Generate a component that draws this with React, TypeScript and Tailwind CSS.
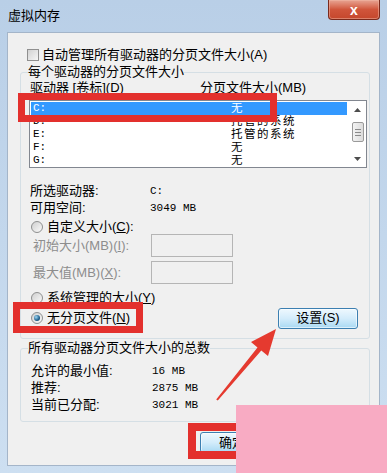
import React from 'react';

const drives = [
  { d: 'C:', s: '无', sel: true },
  { d: 'D:', s: '托管的系统' },
  { d: 'E:', s: '托管的系统' },
  { d: 'F:', s: '无' },
  { d: 'G:', s: '无' },
];

function Radio({ checked = false }: { checked?: boolean }) {
  return (
    <span className="w-[12px] h-[12px] shrink-0 rounded-full border border-[#8e8f8f] bg-linear-to-br from-[#cfcfcf] to-[#fbfbfb] flex items-center justify-center">
      {checked && (
        <span className="w-[6px] h-[6px] rounded-full bg-[radial-gradient(circle_at_35%_35%,#9fd8f4,#1f5f8c_60%,#133f60)]" />
      )}
    </span>
  );
}

function WinButton({ children, className = '' }: { children: React.ReactNode; className?: string }) {
  return (
    <div className={`h-[21px] rounded-[3px] border border-[#3c7fb1] bg-linear-to-b from-[#eef8fe] via-[#d3ecfb] to-[#a9d9f3] flex items-center text-[13px] leading-[14px] shadow-[inset_0_0_0_1px_#ffffff99] ${className}`}>
      {children}
    </div>
  );
}

export default function App() {
  return (
    <div className="w-[387px] h-[473px] relative overflow-hidden bg-linear-to-b from-[#b9cfe7] to-[#cddff1] font-['Liberation_Sans','Noto_Sans_CJK_SC',sans-serif] text-black">
      {/* title bar */}
      <div className="h-[32px] flex items-start justify-between">
        <div className="pl-[8px] mt-[9px] text-[13px] leading-[14px]">虚拟内存</div>
        <div className="mr-[7px] w-[52px] h-[20px] rounded-b-[4px] border border-t-0 border-[#7a2a1c] bg-linear-to-b from-[#e7a493] via-[#d0553b] to-[#c5472c] flex items-center justify-center shadow-[inset_0_0_0_1px_#f2b9a880]">
          <span className="text-white font-bold text-[14px] leading-[14px]">x</span>
        </div>
      </div>

      {/* dialog body */}
      <div className="mx-[7px] h-[434px] bg-[#f0f0f0] border border-[#a4b5c9] pl-[12px] flex flex-col text-[13px] leading-[14px]">
        <div className="mt-[15px] h-[14px] flex items-center pl-[7px] gap-[3px]">
          <span className="w-[12px] h-[12px] border border-[#8f8f8f] bg-linear-to-br from-[#d2d2d2] to-[#f6f6f6]" />
          <span>自动管理所有驱动器的分页文件大小(A)</span>
        </div>

        <fieldset className="mt-[3px] w-[350px] border border-[#d5dfe5] rounded-[3px] pb-[10px]">
          <legend className="ml-[7px] leading-[14px]">每个驱动器的分页文件大小</legend>
          <div className="mt-[2px] h-[14px] flex pl-[9px]">
            <span className="w-[170px]">驱动器 [卷标](D)</span>
            <span>分页文件大小(MB)</span>
          </div>

          <div className="mt-[5px] ml-[8px] w-[338px] h-[68px] border border-[#828790] bg-white flex">
            <div className="flex-1 pt-[1px] pl-[1px] pr-[2px]">
              {drives.map((r) => (
                <div key={r.d} className={`h-[13px] flex items-center ${r.sel ? 'bg-[#3399ff] text-white' : ''}`}>
                  <span className="w-[200px] pl-[2px] font-['Liberation_Mono',monospace] text-[11px] leading-[13px]">{r.d}</span>
                  <span className="text-[11.5px] leading-[13px] tracking-[1.5px]">{r.s}</span>
                </div>
              ))}
            </div>
            <div className="w-[17px] flex flex-col items-center">
              <div className="h-[17px] flex items-center justify-center">
                <svg width="7" height="4" viewBox="0 0 7 4"><path d="M0 4 L3.5 0 L7 4Z" fill="#4d4d4d" /></svg>
              </div>
              <div className="mt-[4px] w-[12px] h-[20px] rounded-[2px] border border-[#9a9a9a] bg-linear-to-r from-[#f3f3f3] to-[#dcdcdc] flex flex-col items-center justify-center gap-[2px]">
                <span className="w-[6px] h-px bg-[#8a8a8a]" />
                <span className="w-[6px] h-px bg-[#8a8a8a]" />
                <span className="w-[6px] h-px bg-[#8a8a8a]" />
              </div>
              <div className="mt-auto h-[17px] flex items-center justify-center">
                <svg width="7" height="4" viewBox="0 0 7 4"><path d="M0 0 L3.5 4 L7 0Z" fill="#4d4d4d" /></svg>
              </div>
            </div>
          </div>

          <div className="mt-[14px] pl-[9px]">
            <div className="h-[17px] flex items-center">
              <span className="w-[120px]">所选驱动器:</span>
              <span className="font-['Liberation_Mono',monospace] text-[11px]">C:</span>
            </div>
            <div className="h-[17px] flex items-center">
              <span className="w-[120px]">可用空间:</span>
              <span className="font-['Liberation_Mono',monospace] text-[11px]">3049 MB</span>
            </div>
          </div>

          <div className="mt-[4px] h-[14px] flex items-center pl-[10px] gap-[4px]">
            <Radio />
            <span>自定义大小(<span className="underline">C</span>):</span>
          </div>
          <div className="h-[23px] flex items-center pl-[12px] text-[#8d8d8d]">
            <span className="w-[118px]">初始大小(MB)(<span className="underline">I</span>):</span>
            <span className="w-[82px] h-[23px] border border-[#b5b5b5] bg-[#f0f0f0]" />
          </div>
          <div className="mt-[4px] h-[23px] flex items-center pl-[12px] text-[#8d8d8d]">
            <span className="w-[118px]">最大值(MB)(<span className="underline">X</span>):</span>
            <span className="w-[82px] h-[23px] border border-[#b5b5b5] bg-[#f0f0f0]" />
          </div>
          <div className="mt-[7px] h-[14px] flex items-center pl-[10px] gap-[4px]">
            <Radio />
            <span>系统管理的大小(<span className="underline">Y</span>)</span>
          </div>
          <div className="mt-[3px] h-[20px] flex items-center justify-between pl-[10px] pr-[11px]">
            <div className="flex items-center gap-[4px]">
              <Radio checked />
              <span>无分页文件(<span className="underline">N</span>)</span>
            </div>
            <WinButton className="w-[80px] h-[20px] justify-center">设置(S)</WinButton>
          </div>
        </fieldset>

        <fieldset className="mt-[2px] w-[350px] border border-[#d5dfe5] rounded-[3px] pb-[8px]">
          <legend className="ml-[7px] leading-[14px]">所有驱动器分页文件大小的总数</legend>
          <div className="mt-[7px] pl-[10px]">
            {[
              ['允许的最小值:', '16 MB'],
              ['推荐:', '2875 MB'],
              ['当前已分配:', '3021 MB'],
            ].map(([k, v]) => (
              <div key={k} className="h-[17px] flex items-center">
                <span className="w-[121px]">{k}</span>
                <span className="font-['Liberation_Mono',monospace] text-[11px]">{v}</span>
              </div>
            ))}
          </div>
        </fieldset>

        <div className="mt-[10px] w-[350px] flex justify-end gap-[8px] pr-[12px]">
          <WinButton className="w-[75px] pl-[18px]">确定</WinButton>
          <WinButton className="w-[75px] justify-center border-[#707070]">取消</WinButton>
        </div>
      </div>

      {/* annotations */}
      <div className="absolute left-[18px] top-[93px] w-[259px] h-[29px] border-[7px] border-[#e3302d]" />
      <div className="absolute left-[13px] top-[302px] w-[130px] h-[31px] border-[7px] border-[#e3302d]" />
      <div className="absolute left-[188px] top-[423px] w-[80px] h-[36px] border-[8px] border-[#e3302d]" />
      <svg className="absolute inset-0 pointer-events-none" width="387" height="473" viewBox="0 0 387 473">
        <polygon
          points="276,329 268,356 261.3,350.6 217.8,400.6 216.2,399.4 257.5,347.4 251,342"
          fill="#e53a2f"
        />
      </svg>
      <div className="absolute left-[236px] top-[405px] w-[151px] h-[68px] bg-[#f8abc3]" />
    </div>
  );
}
